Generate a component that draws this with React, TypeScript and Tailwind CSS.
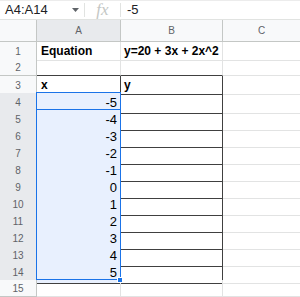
import React from "react";

// A4:A14 selected, bordered block A3:B14
const ROWS: { a?: string; b?: string; bold?: boolean; num?: boolean }[] = [
  { a: "Equation", b: "y=20 + 3x + 2x^2", bold: true },
  {},
  { a: "x", b: "y", bold: true },
  ...[-5, -4, -3, -2, -1, 0, 1, 2, 3, 4, 5].map((n) => ({ a: String(n), num: true })),
  {},
];

function FormulaBar() {
  return (
    <div className="flex h-[20px] items-center border-t border-b border-t-[#ececec] border-b-[#e1e3e1] bg-white text-[13px] text-[#202124]">
      <div className="flex w-[84px] items-center justify-between pl-[5px] pr-[5px]">
        <span>A4:A14</span>
        <svg width="7" height="4" viewBox="0 0 7 4">
          <path d="M0 0h7L3.5 4z" fill="#5f6368" />
        </svg>
      </div>
      <div className="h-[14px] w-px bg-[#e1e3e1]" />
      <div className="flex w-[35px] items-center justify-center font-['Liberation_Serif',serif] text-[17px] italic text-[#c4c7c5]">
        fx
      </div>
      <div className="h-[14px] w-px bg-[#e1e3e1]" />
      <span className="pl-[6px]">-5</span>
    </div>
  );
}

function ColHeader() {
  return (
    <div className="grid h-[22px] grid-cols-[37px_84px_102px_1fr] text-[10px] text-[#5f6368]">
      <div className="border-r border-b border-[#c4c7c5] bg-[#f8f9fa]" />
      <div className="flex items-center justify-center border-r border-b border-[#c4c7c5] bg-[#e8eaed]">A</div>
      <div className="flex items-center justify-center border-r border-b border-[#c4c7c5] bg-[#f8f9fa]">B</div>
      <div className="flex items-center justify-center border-b border-[#c4c7c5] bg-[#f8f9fa]">C</div>
    </div>
  );
}

export default function App() {
  return (
    <div className="h-[297px] w-[300px] overflow-hidden bg-white font-['Liberation_Sans',Arial,sans-serif]">
      <FormulaBar />
      <ColHeader />
      <div className="relative">
        {ROWS.map((r, i) => {
          const n = i + 1;
          const sel = n >= 4 && n <= 14;
          const boxed = n >= 3 && n <= 14;
          const aboveBox = n === 2;
          return (
            <div key={n} className="grid h-[17px] grid-cols-[37px_84px_102px_1fr] text-black">
              <div
                className={
                  sel
                    ? "flex items-center justify-center border-r border-b border-[#c4c7c5] bg-[#e8eaed] text-[10px] text-[#5f6368]"
                    : "flex items-center justify-center border-r border-b border-[#c4c7c5] bg-[#f8f9fa] text-[10px] text-[#5f6368]"
                }
              >
                {n}
              </div>
              <div
                className={
                  (boxed
                    ? "border-r border-b border-[#404040] "
                    : aboveBox
                    ? "border-r border-b border-r-[#e2e3e3] border-b-[#404040] "
                    : "border-r border-b border-[#e2e3e3] ") +
                  (sel ? "bg-[#e8f0fe] " : "") +
                  (r.num ? "flex items-center justify-end pr-[3px] text-[13px] " : "flex items-center pl-[4px] ") +
                  (r.bold ? "text-[12px] font-bold whitespace-nowrap" : "")
                }
              >
                {r.a}
              </div>
              <div
                className={
                  (boxed
                    ? "border-r border-b border-[#404040] "
                    : aboveBox
                    ? "border-r border-b border-r-[#e2e3e3] border-b-[#404040] "
                    : "border-r border-b border-[#e2e3e3] ") +
                  "flex items-center overflow-visible whitespace-nowrap pl-[3px] " +
                  (r.bold ? "text-[12px] font-bold" : "")
                }
              >
                {r.b}
              </div>
              <div className="border-b border-[#e2e3e3]" />
            </div>
          );
        })}
        {/* selection range A4:A14 */}
        <div className="pointer-events-none absolute left-[36px] top-[50px] h-[188px] w-[85px] border border-[#1a73e8]" />
        {/* active cell A4 */}
        <div className="pointer-events-none absolute left-[36px] top-[50px] h-[18px] w-[85px] border border-[#1a73e8]" />
        {/* fill handle */}
        <div className="pointer-events-none absolute left-[117px] top-[235px] h-[6px] w-[6px] border border-white bg-[#1a73e8]" />
      </div>
    </div>
  );
}
